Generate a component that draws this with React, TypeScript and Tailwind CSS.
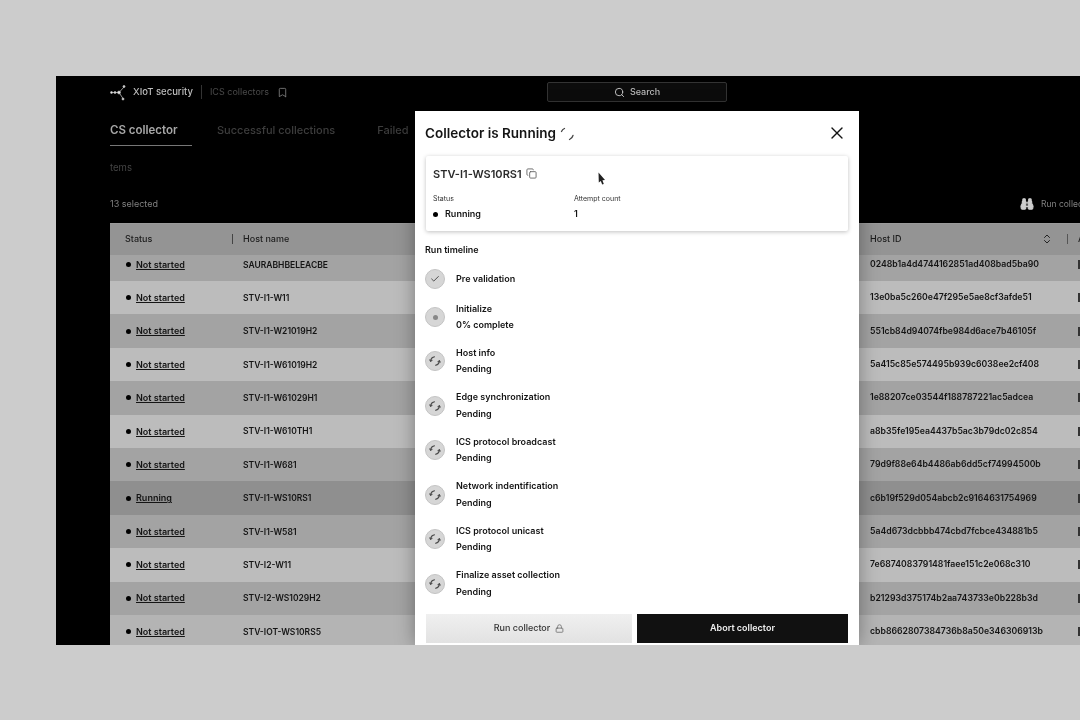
import React from "react";
import { Search, Bookmark, X, Copy, Check, ChevronsUpDown, Binoculars, Lock } from "lucide-react";

const rows = [
  { status: "Not started", host: "SAURABHBELEACBE", id: "0248b1a4d4744162851ad408bad5ba90", bg: "bg-[#a3a3a3] h-[26px] pb-[7px]" },
  { status: "Not started", host: "STV-I1-W11", id: "13e0ba5c260e47f295e5ae8cf3afde51", bg: "bg-[#bcbcbc] h-[33.4px]" },
  { status: "Not started", host: "STV-I1-W21019H2", id: "551cb84d94074fbe984d6ace7b46105f", bg: "bg-[#a3a3a3] h-[33.4px]" },
  { status: "Not started", host: "STV-I1-W61019H2", id: "5a415c85e574495b939c6038ee2cf408", bg: "bg-[#bcbcbc] h-[33.4px]" },
  { status: "Not started", host: "STV-I1-W61029H1", id: "1e88207ce03544f188787221ac5adcea", bg: "bg-[#a3a3a3] h-[33.4px]" },
  { status: "Not started", host: "STV-I1-W610TH1", id: "a8b35fe195ea4437b5ac3b79dc02c854", bg: "bg-[#bcbcbc] h-[33.4px]" },
  { status: "Not started", host: "STV-I1-W681", id: "79d9f88e64b4486ab6dd5cf74994500b", bg: "bg-[#a3a3a3] h-[33.4px]" },
  { status: "Running", host: "STV-I1-WS10RS1", id: "c6b19f529d054abcb2c9164631754969", bg: "bg-[#8f8f8f] h-[33.4px]" },
  { status: "Not started", host: "STV-I1-W581", id: "5a4d673dcbbb474cbd7fcbce434881b5", bg: "bg-[#a3a3a3] h-[33.4px]" },
  { status: "Not started", host: "STV-I2-W11", id: "7e6874083791481faee151c2e068c310", bg: "bg-[#bcbcbc] h-[33.4px]" },
  { status: "Not started", host: "STV-I2-WS1029H2", id: "b21293d375174b2aa743733e0b228b3d", bg: "bg-[#a3a3a3] h-[33.4px]" },
  { status: "Not started", host: "STV-IOT-WS10RS5", id: "cbb8662807384736b8a50e346306913b", bg: "bg-[#b4b4b4] h-[33.4px]" },
];

const steps = [
  { name: "Host info", note: "Pending" },
  { name: "Edge synchronization", note: "Pending" },
  { name: "ICS protocol broadcast", note: "Pending" },
  { name: "Network indentification", note: "Pending" },
  { name: "ICS protocol unicast", note: "Pending" },
  { name: "Finalize asset collection", note: "Pending" },
];

const Logo = () => (
  <svg width="17" height="17" viewBox="0 0 17 17" fill="none" stroke="#bdbdbd" strokeWidth="0.8">
    <path d="M2 8.5H9L14 3M9 8.5L13 14.5" />
    <circle cx="1.5" cy="8.5" r="1" fill="#e5e5e5" />
    <circle cx="5" cy="8.5" r="1" fill="#e5e5e5" />
    <circle cx="9" cy="8.5" r="1.4" fill="#e5e5e5" />
    <circle cx="14" cy="2.5" r="1" fill="#e5e5e5" />
    <circle cx="13" cy="15" r="1" fill="#e5e5e5" />
  </svg>
);

const Spinner = () => (
  <svg width="16" height="16" viewBox="0 0 16 16" fill="none" stroke="#444444" strokeWidth="1.3" strokeLinecap="round">
    <path d="M2.5 5.5A6 6 0 0 1 5.5 2.5" />
    <path d="M14 9.5A6 6 0 0 1 10.5 13.5" />
  </svg>
);

const PendingDot = () => (
  <div className="flex h-[20px] w-[20px] shrink-0 items-center justify-center rounded-full border border-[#c4c4c4] bg-[#d6d6d6]">
    <svg width="14" height="14" viewBox="0 0 14 14" fill="none" stroke="#4a4a4a" strokeWidth="1.1" strokeLinecap="round">
      <path d="M2.6 7.2L2.8 6A4.5 4.5 0 0 1 6.5 2.8" />
      <path d="M11.4 6.8L11.2 8A4.5 4.5 0 0 1 7.5 11.2" />
      <path d="M1.8 5.9L2.7 7.2L4 6.4" />
      <path d="M12.2 8.1L11.3 6.8L10 7.6" />
    </svg>
  </div>
);

const App = () => {
  return (
    <div className="h-[720px] w-[1080px] overflow-hidden bg-[#cccccc] pl-[56px] pt-[76px] font-['Inter','Liberation_Sans',sans-serif]">
      <div className="relative h-[569px] w-[1024px] overflow-hidden bg-black blur-[0.7px]">
        {/* top bar */}
        <div className="relative flex h-[32px] items-center pl-[54px]">
          <Logo />
          <span className="ml-[6px] text-[9.5px] font-medium text-[#bdbdbd]">XIoT security</span>
          <div className="ml-[8px] h-[14px] w-px bg-[#333333]" />
          <span className="ml-[8px] text-[9px] text-[#4a4a4a]">ICS collectors</span>
          <Bookmark size={11} className="ml-[8px] text-[#777777]" />
          <div className="absolute left-[491px] top-[6px] flex h-[20px] w-[180px] items-center justify-center gap-[5px] rounded-[2px] border border-[#333333] bg-[#0c0c0c]">
            <Search size={11} className="text-[#cccccc]" />
            <span className="text-[9px] font-medium text-[#bbbbbb]">Search</span>
          </div>
        </div>

        {/* tabs */}
        <div className="mt-[14px] flex pl-[54px]">
          <div className="h-[24px] w-[82px] border-b border-[#777777] text-[11.5px] font-semibold leading-[16px] text-[#a8a8a8]">
            CS collector
          </div>
          <span className="ml-[25px] text-[11px] font-medium leading-[16px] text-[#3d3d3d]">Successful collections</span>
          <span className="ml-[42px] text-[11px] font-medium leading-[16px] text-[#3d3d3d]">Failed</span>
        </div>

        <div className="mt-[15px] pl-[54px] text-[9.5px] leading-[14px] text-[#444444]">tems</div>

        <div className="mt-[22px] flex h-[14px] items-center justify-between pl-[54px]">
          <span className="text-[9px] text-[#808080]">13 selected</span>
          <div className="flex w-[60px] items-center gap-[7px]">
            <Binoculars size={14} fill="#cccccc" className="shrink-0 text-[#cccccc]" />
            <span className="whitespace-nowrap text-[8.5px] text-[#808080]">Run collector</span>
          </div>
        </div>

        {/* table */}
        <div className="ml-[54px] mt-[12px] w-[970px] border-t border-[#9a9a9a]">
          <div className="flex h-[31px] items-center bg-[#949494] pb-[2px] text-[9px] font-medium text-[#1c1c1c]">
            <div className="flex w-[133px] shrink-0 items-center justify-between pl-[15px] pr-[10px]">
              <span>Status</span>
              <div className="h-[10px] w-[1.5px] bg-[#444444]" />
            </div>
            <div className="w-[627px] shrink-0">Host name</div>
            <div className="flex w-[208px] shrink-0 items-center justify-between pr-[10px]">
              <span>Host ID</span>
              <div className="flex items-center gap-[14px]">
                <ChevronsUpDown size={12} className="text-[#222222]" />
                <div className="h-[10px] w-[1.5px] bg-[#555555]" />
              </div>
            </div>
            <div>A</div>
          </div>
          {rows.map((r) => (
            <div key={r.id} className={`flex items-center text-[8.7px] font-semibold text-[#141414] ${r.bg}`}>
              <div className="flex w-[133px] shrink-0 items-center pl-[16px]">
                <div className="h-[5px] w-[5px] rounded-full bg-black" />
                <span className="ml-[5px] text-[9px] underline">{r.status}</span>
              </div>
              <div className="mt-[1px] w-[627px] shrink-0 text-[8.5px]">{r.host}</div>
              <div className="w-[208px] shrink-0">{r.id}</div>
              <div className="h-[9px] w-[4px] shrink-0 bg-[#333333]" />
            </div>
          ))}
        </div>

        {/* modal */}
        <div className="absolute left-[359px] top-[35px] flex h-[534px] w-[444px] flex-col bg-white px-[10px] text-[#141414] shadow-[0_0_18px_rgba(0,0,0,0.35)]">
          <div className="flex h-[44px] items-center justify-between pr-[2px]">
            <div className="flex items-center gap-[3px] pt-[1px]">
              <span className="text-[13.5px] font-semibold leading-none">Collector is Running</span>
              <Spinner />
            </div>
            <X size={20} strokeWidth={1.6} />
          </div>

          <div className="mx-[1px] mt-[1px] h-[75px] rounded-[2px] bg-white px-[7px] pt-[11px] shadow-[0_1px_4px_rgba(0,0,0,0.25)]">
            <div className="flex h-[14px] items-center gap-[4px]">
              <span className="text-[11px] font-semibold text-[#2a2a2a]">STV-I1-WS10RS1</span>
              <Copy size={11} className="-mt-[2px] text-[#666666]" />
            </div>
            <div className="mt-[13px] flex">
              <div className="w-[141px]">
                <div className="text-[7px] leading-[10px] text-[#333333]">Status</div>
                <div className="mt-[4px] flex items-center gap-[7px] text-[9px] font-semibold leading-[12px]">
                  <div className="h-[5px] w-[5px] rounded-full bg-black" />
                  Running
                </div>
              </div>
              <div>
                <div className="text-[7px] leading-[10px] text-[#333333]">Attempt count</div>
                <div className="mt-[4px] text-[9px] font-semibold leading-[12px]">1</div>
              </div>
            </div>
          </div>

          <div className="mt-[13px] text-[9px] font-semibold leading-[12px]">Run timeline</div>

          <div className="mt-[13px] flex h-[20px] items-center gap-[11px]">
            <div className="flex h-[20px] w-[20px] items-center justify-center rounded-full border border-[#c4c4c4] bg-[#d6d6d6]">
              <Check size={10} className="text-[#333333]" />
            </div>
            <span className="text-[9px] font-semibold">Pre validation</span>
          </div>

          <div className="mt-[12px] flex h-[32px] items-center gap-[11px]">
            <div className="flex h-[20px] w-[20px] items-center justify-center rounded-full border border-[#c4c4c4] bg-[#d6d6d6]">
              <div className="h-[5px] w-[5px] rounded-full bg-[#888888]" />
            </div>
            <div className="text-[9px] font-semibold leading-[16px]">
              <div>Initialize</div>
              <div>0% complete</div>
            </div>
          </div>

          <div className="mt-[12px] flex flex-col gap-[12.5px]">
            {steps.map((s) => (
              <div key={s.name} className="flex h-[32px] items-center gap-[11px]">
                <PendingDot />
                <div className="text-[9px] font-semibold leading-[16.5px]">
                  <div>{s.name}</div>
                  <div>{s.note}</div>
                </div>
              </div>
            ))}
          </div>

          <div className="mt-[14px] flex items-start gap-[5px] pl-[1px]">
            <div className="flex h-[29px] w-[206px] items-center justify-center gap-[5px] bg-gradient-to-b from-[#f0f0f0] to-[#e2e2e2] text-[9px] font-medium text-[#333333]">
              Run collector
              <Lock size={9} className="text-[#666666]" />
            </div>
            <div className="flex h-[29px] w-[211px] items-center justify-center bg-[#111111] text-[9px] font-semibold text-[#eeeeee]">
              Abort collector
            </div>
          </div>

          {/* mouse pointer */}
          <svg className="absolute left-[183px] top-[61px]" width="8" height="13" viewBox="0 0 8 13" fill="#222222">
            <path d="M0.5 0.5L7 8L4.4 8.2L5.8 12L4.2 12.6L2.8 8.9L0.8 10.6Z" />
          </svg>
        </div>
      </div>
    </div>
  );
};

export default App;
